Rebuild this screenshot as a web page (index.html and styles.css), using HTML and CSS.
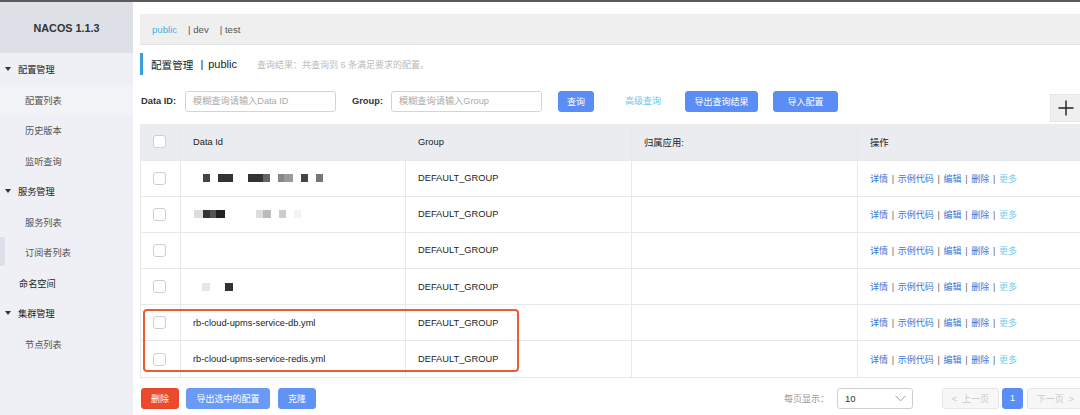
FILE: index.html
```html
<!DOCTYPE html>
<html lang="zh">
<head>
<meta charset="utf-8">
<title>NACOS</title>
<link rel="stylesheet" href="styles.css">
</head>
<body>
<div class="topline"></div>
<div class="app">
  <aside class="sidebar">
    <div class="brand">NACOS 1.1.3</div>
    <nav class="menu">
      <div class="group"><span class="caret"></span>配置管理</div>
      <div class="item active">配置列表</div>
      <div class="item">历史版本</div>
      <div class="item">监听查询</div>
      <div class="group"><span class="caret"></span>服务管理</div>
      <div class="item">服务列表</div>
      <div class="item">订阅者列表</div>
      <div class="group plain">命名空间</div>
      <div class="group"><span class="caret"></span>集群管理</div>
      <div class="item">节点列表</div>
    </nav>
    <div class="handle"></div>
  </aside>
  <main class="main">
    <div class="tabs">
      <span class="tab current">public</span>
      <span class="tab">| dev</span>
      <span class="tab">| test</span>
    </div>
    <div class="title">
      <span class="title-main">配置管理</span>
      <span class="title-bar">|</span>
      <span class="title-ns">public</span>
      <span class="title-sub">查询结果：共查询到 6 条满足要求的配置。</span>
    </div>
    <div class="search">
      <label class="lbl">Data ID:</label>
      <div class="input">模糊查询请输入Data ID</div>
      <label class="lbl lbl2">Group:</label>
      <div class="input">模糊查询请输入Group</div>
      <button class="btn btn-q">查询</button>
      <span class="adv">高级查询</span>
      <button class="btn btn-exp">导出查询结果</button>
      <button class="btn btn-imp">导入配置</button>
      <button class="plus"><svg width="16" height="16" viewBox="0 0 16 16"><path d="M8 0.5v15M0.5 8h15" stroke="#222" stroke-width="1.4"/></svg></button>
    </div>
    <div class="table-wrap">
      <table class="grid">
        <colgroup><col class="c0"><col class="c1"><col class="c2"><col class="c3"><col class="c4"></colgroup>
        <thead>
          <tr><th><span class="cb"></span></th><th>Data Id</th><th>Group</th><th>归属应用:</th><th>操作</th></tr>
        </thead>
        <tbody>
          <tr>
            <td><span class="cb"></span></td>
            <td><span class="blur">
              <i class="px" style="margin-left:10px;width:7px;background:#444"></i><i class="px" style="margin-left:8px;width:15px;background:#333"></i><i class="px" style="margin-left:15px;width:15px;background:#333"></i><i class="px" style="width:7px;background:#666"></i><i class="px" style="margin-left:8px;width:6px;background:#888"></i><i class="px" style="width:9px;background:#9a9a9a"></i><i class="px" style="margin-left:8px;width:7px;background:#444"></i><i class="px" style="margin-left:8px;width:7px;background:#777"></i>
            </span></td>
            <td>DEFAULT_GROUP</td><td></td>
            <td class="ops"><a>详情</a><span class="sep">|</span><a>示例代码</a><span class="sep">|</span><a>编辑</a><span class="sep">|</span><a>删除</a><span class="sep">|</span><a class="more">更多</a></td>
          </tr>
          <tr>
            <td><span class="cb"></span></td>
            <td><span class="blur">
              <i class="px" style="margin-left:1px;width:9px;background:#ddd"></i><i class="px" style="width:7px;background:#333"></i><i class="px" style="width:6px;background:#555"></i><i class="px" style="width:9px;background:#222"></i><i class="px" style="margin-left:31px;width:7px;background:#ddd"></i><i class="px" style="width:8px;background:#bbb"></i><i class="px" style="margin-left:8px;width:7px;background:#ccc"></i><i class="px" style="margin-left:8px;width:7px;background:#f3f3f3"></i>
            </span></td>
            <td>DEFAULT_GROUP</td><td></td>
            <td class="ops"><a>详情</a><span class="sep">|</span><a>示例代码</a><span class="sep">|</span><a>编辑</a><span class="sep">|</span><a>删除</a><span class="sep">|</span><a class="more">更多</a></td>
          </tr>
          <tr>
            <td><span class="cb"></span></td>
            <td></td>
            <td>DEFAULT_GROUP</td><td></td>
            <td class="ops"><a>详情</a><span class="sep">|</span><a>示例代码</a><span class="sep">|</span><a>编辑</a><span class="sep">|</span><a>删除</a><span class="sep">|</span><a class="more">更多</a></td>
          </tr>
          <tr>
            <td><span class="cb"></span></td>
            <td><span class="blur">
              <i class="px" style="margin-left:9px;width:8px;background:#e6e6e6"></i><i class="px" style="margin-left:15px;width:8px;background:#333"></i>
            </span></td>
            <td>DEFAULT_GROUP</td><td></td>
            <td class="ops"><a>详情</a><span class="sep">|</span><a>示例代码</a><span class="sep">|</span><a>编辑</a><span class="sep">|</span><a>删除</a><span class="sep">|</span><a class="more">更多</a></td>
          </tr>
          <tr>
            <td><span class="cb"></span></td>
            <td>rb-cloud-upms-service-db.yml</td>
            <td>DEFAULT_GROUP</td><td></td>
            <td class="ops"><a>详情</a><span class="sep">|</span><a>示例代码</a><span class="sep">|</span><a>编辑</a><span class="sep">|</span><a>删除</a><span class="sep">|</span><a class="more">更多</a></td>
          </tr>
          <tr>
            <td><span class="cb"></span></td>
            <td>rb-cloud-upms-service-redis.yml</td>
            <td>DEFAULT_GROUP</td><td></td>
            <td class="ops"><a>详情</a><span class="sep">|</span><a>示例代码</a><span class="sep">|</span><a>编辑</a><span class="sep">|</span><a>删除</a><span class="sep">|</span><a class="more">更多</a></td>
          </tr>
        </tbody>
      </table>
      <div class="highlight"></div>
    </div>
    <div class="footer">
      <button class="btn btn-del">删除</button>
      <button class="btn btn-exs">导出选中的配置</button>
      <button class="btn btn-clone">克隆</button>
      <div class="pager">
        <span class="pp-label">每页显示：</span>
        <div class="select"><span>10</span><svg width="11" height="7" viewBox="0 0 11 7"><path d="M0.5 0.8l5 5 5-5" fill="none" stroke="#999" stroke-width="1"/></svg></div>
        <button class="pg pg-prev">&lt; &nbsp;上一页</button>
        <button class="pg pg-cur">1</button>
        <button class="pg pg-next">下一页 &nbsp;&gt;</button>
      </div>
    </div>
  </main>
</div>
</body>
</html>
```

FILE: styles.css
```css
* { box-sizing: border-box; }
html, body { margin: 0; padding: 0; }
body {
  width: 1080px;
  height: 415px;
  overflow: hidden;
  background: #fff;
  font-family: "Liberation Sans", "Noto Sans CJK SC", sans-serif;
  font-size: 9px;
  color: #333;
}
.topline { height: 2px; background: #5b5b5b; }
.app { display: flex; height: 413px; }

.sidebar {
  position: relative;
  width: 133px;
  flex: none;
  background: #eef0f5;
}
.brand {
  height: 51px;
  background: #dde0e7;
  display: flex;
  align-items: center;
  justify-content: center;
  font-weight: bold;
  font-size: 10.8px;
  color: #333;
}
.menu { padding-top: 1px; }
.group, .item {
  height: 30.5px;
  display: flex;
  align-items: center;
  font-size: 9.2px;
}
.group { padding-left: 5px; color: #222; }
.group.plain { padding-left: 19px; }
.caret {
  width: 0; height: 0;
  border-left: 3.5px solid transparent;
  border-right: 3.5px solid transparent;
  border-top: 4px solid #333;
  margin-right: 7px;
}
.item { padding-left: 25px; color: #555; }
.item.active { background: #f2f3f7; }
.handle {
  position: absolute;
  left: 0; top: 235px;
  width: 5px; height: 29px;
  background: #dcdfe7;
  border-radius: 0 3px 3px 0;
}

.main {
  flex: 1;
  padding-left: 7px;
  min-width: 0;
}
.tabs {
  margin-top: 12px;
  height: 31px;
  background: #efefef;
  border-bottom: 1px solid #e2e2e2;
  display: flex;
  align-items: center;
  padding-left: 12px;
  font-size: 9.6px;
  color: #555;
}
.tab { margin-right: 11px; }
.tab.current { color: #3db6e0; }

.title {
  margin-top: 8px;
  height: 22px;
  border-left: 3px solid #3a9fd8;
  padding-left: 8px;
  display: flex;
  align-items: center;
}
.title-main { font-size: 10.6px; color: #222; }
.title-bar { font-size: 11px; margin-left: 7px; color: #222; }
.title-ns { font-size: 11px; margin-left: 5px; color: #222; }
.title-sub { margin-left: 20px; font-size: 9px; color: #bbb; }

.search {
  margin-top: 16px;
  height: 31px;
  display: flex;
  align-items: flex-start;
}
.lbl { height: 21px; line-height: 21px; font-weight: bold; font-size: 9.3px; color: #333; margin-left: 1px; width: 44px; }
.lbl2 { margin-left: 16px; width: 39px; }
.input {
  width: 151px;
  height: 21px;
  border: 1px solid #d4d4d4;
  border-radius: 3px;
  padding-left: 7px;
  line-height: 19px;
  color: #aaa;
  font-size: 9.2px;
}
.btn {
  height: 21px;
  border: 1px solid #5a8cf5;
  border-radius: 3px;
  background: #5b8df6;
  color: #fff;
  font-family: inherit;
  font-size: 9px;
  padding: 0;
  cursor: pointer;
}
.btn-q { width: 36px; margin-left: 16px; }
.adv { margin-left: 31px; color: #70c6ee; height: 21px; line-height: 21px; font-size: 9px; }
.btn-exp { width: 73px; margin-left: 24px; }
.btn-imp { width: 65px; margin-left: 15px; }
.plus {
  margin-left: auto;
  margin-top: 3px;
  width: 30px;
  height: 28px;
  background: #efefef;
  border: 1px solid #e6e6e6;
  border-right: none;
  padding: 0;
  display: flex;
  align-items: center;
  justify-content: center;
}

.table-wrap {
  position: relative;
  margin-top: 2px;
  width: 970px;
}
.grid {
  border-collapse: collapse;
  table-layout: fixed;
  width: 970px;
  font-size: 9.3px;
}
.c0 { width: 40px; }
.c1 { width: 225px; }
.c2 { width: 226px; }
.c3 { width: 226px; }
.c4 { width: 253px; }
.grid th, .grid td {
  border: 1px solid #e8e9ed;
  border-top: none;
  text-align: left;
  padding: 0 0 0 12px;
  font-weight: normal;
  color: #222;
  white-space: nowrap;
}
.grid thead tr { height: 36px; background: #ebecf0; }
.grid tbody tr { height: 36.2px; }
.cb {
  display: block;
  width: 13px;
  height: 13px;
  border: 1px solid #cfcfcf;
  border-radius: 3px;
  background: #fff;
}
.blur { display: flex; align-items: center; }
.px { display: block; height: 8px; }
.grid td.ops { font-size: 9px; }
.ops a { color: #3a74d4; }
.ops a.more { color: #6fd0ec; }
.sep { color: #666; margin: 0 3.7px; }
.highlight {
  position: absolute;
  left: 3px;
  top: 185px;
  width: 376px;
  height: 63px;
  border: 2px solid #eb5b36;
  border-radius: 4px;
}

.footer {
  margin-top: 10px;
  display: flex;
  align-items: center;
  height: 21px;
}
.btn-del { width: 38px; margin-left: 1px; background: #eb4a2c; border-color: #e54528; }
.btn-exs { width: 84px; margin-left: 7px; background: #6a9af6; border-color: #6a9af6; }
.btn-clone { width: 38px; margin-left: 8px; background: #6193f6; border-color: #6193f6; }
.pager { margin-left: auto; display: flex; align-items: center; margin-right: -4px; }
.pp-label { color: #999; font-size: 9px; margin-right: 8px; }
.select {
  width: 76px;
  height: 21px;
  border: 1px solid #cfcfcf;
  border-radius: 3px;
  display: flex;
  align-items: center;
  justify-content: space-between;
  padding: 0 6px 0 7px;
  font-size: 9.5px;
  color: #333;
}
.pg {
  height: 21px;
  border: 1px solid #e6e6e6;
  border-radius: 3px;
  background: #f7f7f7;
  color: #c8c8c8;
  font-family: inherit;
  font-size: 9px;
  padding: 0;
}
.pg-prev { width: 57px; margin-left: 29px; }
.pg-cur { width: 21px; margin-left: 3px; background: #5b8df6; border-color: #5b8df6; color: #fff; }
.pg-next { width: 57px; margin-left: 4px; }
```
